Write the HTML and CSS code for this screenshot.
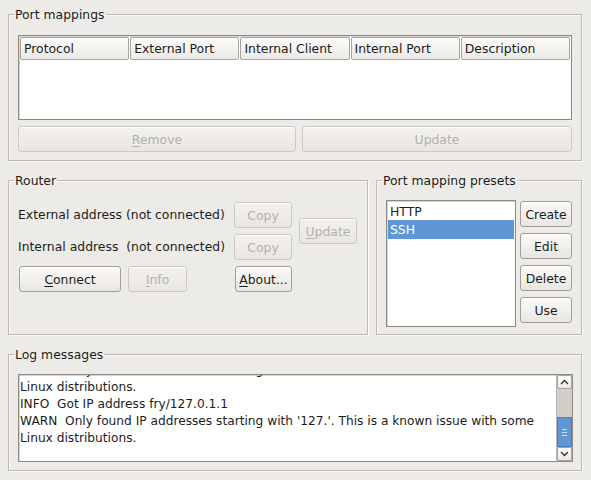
FILE: index.html
```html
<!DOCTYPE html>
<html>
<head>
<meta charset="utf-8">
<link rel="stylesheet" href="styles.css">
</head>
<body>
<div class="window">
  <fieldset class="frame mappings">
    <legend>Port mappings</legend>
    <div class="table">
      <div class="thead">
        <div class="th">Protocol</div>
        <div class="th">External Port</div>
        <div class="th">Internal Client</div>
        <div class="th">Internal Port</div>
        <div class="th">Description</div>
      </div>
    </div>
    <div class="btnrow">
      <button class="btn disabled"><u>R</u>emove</button>
      <button class="btn disabled">Update</button>
    </div>
  </fieldset>

  <div class="middle">
    <fieldset class="frame router">
      <legend>Router</legend>
      <div class="rgrid">
        <div class="label r1">External address (not connected)</div>
        <button class="btn disabled copy1">Copy</button>
        <button class="btn disabled rupdate"><u>U</u>pdate</button>
        <div class="label r2">Internal address  (not connected)</div>
        <button class="btn disabled copy2">Copy</button>
        <div class="r3">
          <button class="btn connect"><u>C</u>onnect</button>
          <button class="btn disabled info"><u>I</u>nfo</button>
        </div>
        <button class="btn about"><u>A</u>bout...</button>
      </div>
    </fieldset>

    <fieldset class="frame presets">
      <legend>Port mapping presets</legend>
      <div class="pbody">
        <div class="list">
          <div class="item">HTTP</div>
          <div class="item selected">SSH</div>
        </div>
        <div class="pbuttons">
          <button class="btn">Create</button>
          <button class="btn">Edit</button>
          <button class="btn">Delete</button>
          <button class="btn">Use</button>
        </div>
      </div>
    </fieldset>
  </div>

  <fieldset class="frame log">
    <legend>Log messages</legend>
    <div class="logbox">
      <div class="logtext">
        <div class="lines">
          <div class="line">WARN  Only found IP addresses starting with '127.'. This is a known issue with some</div>
          <div class="line">Linux distributions.</div>
          <div class="line">INFO  Got IP address fry/127.0.1.1</div>
          <div class="line">WARN  Only found IP addresses starting with '127.'. This is a known issue with some</div>
          <div class="line">Linux distributions.</div>
        </div>
      </div>
      <div class="scrollbar">
        <div class="sbtn up"><svg width="9" height="6" viewBox="0 0 9 6"><path d="M1 5 L4.5 1.5 L8 5" fill="none" stroke="#333" stroke-width="1.3"/></svg></div>
        <div class="trough"><div class="thumb"><span></span><span></span><span></span></div></div>
        <div class="sbtn down"><svg width="9" height="6" viewBox="0 0 9 6"><path d="M1 1 L4.5 4.5 L8 1" fill="none" stroke="#333" stroke-width="1.3"/></svg></div>
      </div>
    </div>
  </fieldset>
</div>
</body>
</html>
```

FILE: styles.css
```css
html, body {
  margin: 0;
  padding: 0;
}
body {
  width: 591px;
  height: 480px;
  background: #edebe7;
  font-family: "DejaVu Sans", "Liberation Sans", sans-serif;
  font-size: 12.4px;
  color: #1c1c1c;
  overflow: hidden;
}
.window {
  padding: 7px 9px 0 8px;
  display: flex;
  flex-direction: column;
}
.frame {
  margin: 0;
  border: 1px solid #bdb9b1;
  box-shadow: inset 1px 1px 0 #fbfaf8, 1px 1px 0 #fbfaf8;
  min-width: 0;
}
.frame legend {
  padding: 0 1px;
  margin-left: -4px;
  line-height: 15px;
  height: 15px;
  color: #1c1c1c;
}
.mappings {
  padding: 13px 9px 8px 9px;
}
.table {
  height: 81px;
  border: 1px solid #8e8a83;
  background: #fff;
  padding: 1px;
  box-shadow: inset 1px 1px 0 #d8d5d0;
}
.thead {
  display: grid;
  grid-template-columns: repeat(5, 1fr);
  gap: 1px;
}
.th {
  height: 21px;
  line-height: 21px;
  border: 1px solid #aaa69f;
  border-radius: 2px;
  background: linear-gradient(#fbfbfa, #ece9e5);
  padding-left: 3px;
  white-space: nowrap;
  overflow: hidden;
}
.btnrow {
  margin-top: 6px;
  display: grid;
  grid-template-columns: 278px 1fr;
  gap: 6px;
}
.btn {
  font-family: inherit;
  font-size: inherit;
  color: #1c1c1c;
  height: 26px;
  padding: 0;
  margin: 0;
  border: 1px solid #a29e97;
  border-radius: 3px;
  background: linear-gradient(#fbfaf9, #e9e6e1);
  box-shadow: inset 0 1px 0 #ffffff;
  white-space: nowrap;
}
.btn.disabled {
  color: #b4b0a9;
  border-color: #cdc9c2;
  background: linear-gradient(#f3f1ee, #e9e6e2);
}
.btn u {
  text-underline-offset: 2px;
}
.middle {
  margin-top: 12px;
  display: flex;
  gap: 8px;
  height: 162px;
}
.router {
  width: 360px;
  box-sizing: border-box;
  padding: 14px 9px 0 9px;
}
.rgrid {
  display: grid;
  grid-template-columns: 209px 58px 58px;
  grid-template-rows: 26px 26px 26px;
  column-gap: 7px;
  row-gap: 6px;
}
.label {
  line-height: 26px;
  white-space: pre;
}
.r1 { grid-column: 1; grid-row: 1; }
.copy1 { grid-column: 2; grid-row: 1; }
.rupdate { grid-column: 3; grid-row: 1 / span 2; align-self: center; }
.r2 { grid-column: 1; grid-row: 2; }
.copy2 { grid-column: 2; grid-row: 2; }
.r3 {
  grid-column: 1;
  grid-row: 3;
  display: flex;
  gap: 7px;
  padding-left: 1px;
}
.connect { width: 102px; }
.info { width: 59px; }
.about { grid-column: 2; grid-row: 3; margin-left: 1px; width: 57px; }
.presets {
  width: 206px;
  box-sizing: border-box;
  padding: 12px 9px 0 9px;
}
.pbody {
  display: flex;
  gap: 4px;
}
.list {
  width: 130px;
  height: 127px;
  box-sizing: border-box;
  background: #fff;
  border: 1px solid #8e8a83;
  box-shadow: inset 1px 1px 0 #d8d5d0;
  padding-top: 2px;
}
.item {
  height: 17px;
  line-height: 17px;
  padding-left: 2px;
  margin: 0 1px;
}
.item.selected {
  background: #5f96d4;
  color: #fff;
  height: 19px;
  line-height: 19px;
}
.pbuttons {
  width: 52px;
  margin-top: 1px;
  display: flex;
  flex-direction: column;
  gap: 6px;
}
.log {
  margin-top: 12px;
  padding: 12px 8px 8px 9px;
}
.logbox {
  height: 88px;
  box-sizing: border-box;
  border: 1px solid #8e8a83;
  background: #fff;
  display: flex;
  box-shadow: inset 1px 1px 0 #d8d5d0;
}
.logtext {
  flex: 1;
  overflow: hidden;
  padding-left: 1px;
}
.lines {
  margin-top: -13px;
  line-height: 17px;
  font-size: 12.2px;
}
.line {
  white-space: pre;
}
.scrollbar {
  width: 16px;
  display: flex;
  flex-direction: column;
  background: #d3cfc8;
  border-left: 1px solid #b9b5ae;
  box-sizing: border-box;
}
.sbtn {
  height: 14px;
  box-sizing: border-box;
  border: 1px solid #a8a49d;
  border-radius: 2px;
  background: linear-gradient(#fdfdfc, #ebe8e4);
  display: flex;
  align-items: center;
  justify-content: center;
}
.trough {
  flex: 1;
  display: flex;
  flex-direction: column;
  justify-content: flex-end;
}
.thumb {
  height: 30px;
  box-sizing: border-box;
  background: #5f96d4;
  border: 1px solid #4a7fbf;
  display: flex;
  flex-direction: column;
  align-items: center;
  justify-content: center;
  gap: 2px;
}
.thumb span {
  display: block;
  width: 5px;
  height: 1px;
  background: #cfe0f4;
}
```
